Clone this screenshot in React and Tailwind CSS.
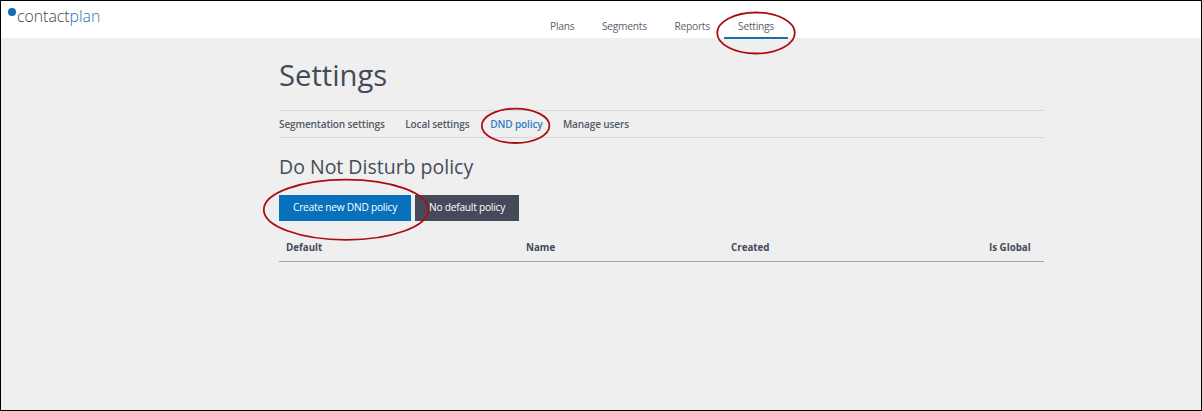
const navItems = [
  { label: "Plans", cell: "w-[52px]" },
  { label: "Segments", cell: "w-[72.5px]" },
  { label: "Reports", cell: "w-[49.5px]" },
];

const tabs = [
  { label: "Segmentation settings", cell: "w-[126.3px]" },
  { label: "Local settings", cell: "w-[85px]" },
  { label: "DND policy", cell: "w-[72.7px] text-[#2f7fc1]" },
  { label: "Manage users", cell: "" },
];

function Header() {
  return (
    <header className="flex h-[37.4px] bg-white">
      <div className="flex w-[549px] pl-[7px]">
        <span className="mt-[7px] size-[8px] shrink-0 rounded-full bg-[#0f6cb6]" />
        <span className="ml-px mt-[5px] h-5 text-[15.8px] font-light leading-5 text-[#3f464f]">
          contact<span className="text-[#1a74bd]">plan</span>
        </span>
      </div>
      <nav className="flex h-[38px] text-[10.2px] tracking-[-0.24px] text-[#5b616b]">
        {navItems.map((item) => (
          <a key={item.label} className={`${item.cell} shrink-0 pt-[18px] leading-[14px]`}>
            {item.label}
          </a>
        ))}
        <a className="h-[38px] w-[64px] shrink-0 border-b-2 border-[#1b6fa9] pt-[18px] text-center leading-[14px]">
          Settings
        </a>
      </nav>
    </header>
  );
}

// Hand-marked callouts laid over the page.
function Callouts() {
  return (
    <svg
      className="pointer-events-none absolute -left-px -top-px"
      width="1202"
      height="411"
      viewBox="0 0 1202 411"
      fill="none"
      stroke="#ad0d10"
      strokeWidth="1.8"
    >
      <ellipse cx="756" cy="33" rx="38.8" ry="20.5" />
      <ellipse cx="515.6" cy="125.8" rx="33.8" ry="17.2" />
      <ellipse cx="346.1" cy="209.7" rx="82.3" ry="30.1" />
    </svg>
  );
}

export default function App() {
  return (
    <div className="relative h-[411px] w-[1202px] overflow-hidden border border-black bg-[#efefef] font-['Open_Sans',sans-serif] text-[#444b57]">
      <Header />
      <main className="ml-[278px] w-[765px]">
        <h1 className="mt-[16.6px] h-10 text-[29.2px] leading-10">Settings</h1>
        <div className="mt-[15px] flex h-7 border-y border-[#d3d5d7] text-[10.1px] font-semibold leading-[26px] tracking-[-0.16px] text-[#545b66]">
          {tabs.map((tab) => (
            <a key={tab.label} className={`${tab.cell} shrink-0 whitespace-nowrap`}>
              {tab.label}
            </a>
          ))}
        </div>
        <h2 className="mt-[15px] h-7 text-[19.5px] leading-7">Do Not Disturb policy</h2>
        <div className="mt-[14px] flex gap-1 text-[10.2px] leading-[14px] tracking-[-0.24px] text-white">
          <button className="h-[26px] w-[132px] whitespace-nowrap bg-[#0771bc] pb-px">Create new DND policy</button>
          <button className="h-[26px] w-[104px] whitespace-nowrap bg-[#444a5a] pb-px">No default policy</button>
        </div>
        <table className="mt-[13px] w-full table-fixed border-collapse text-left text-[9.75px] leading-[27px]">
          <thead>
            <tr className="border-b border-[#a3a5a8]">
              <th className="w-[240px] p-0 pl-[7px] font-bold">Default</th>
              <th className="w-[205px] p-0 pl-[7px] font-bold">Name</th>
              <th className="w-[258px] p-0 pl-[7px] font-bold">Created</th>
              <th className="p-0 pl-[7px] font-bold">Is Global</th>
            </tr>
          </thead>
        </table>
      </main>
      <Callouts />
    </div>
  );
}
